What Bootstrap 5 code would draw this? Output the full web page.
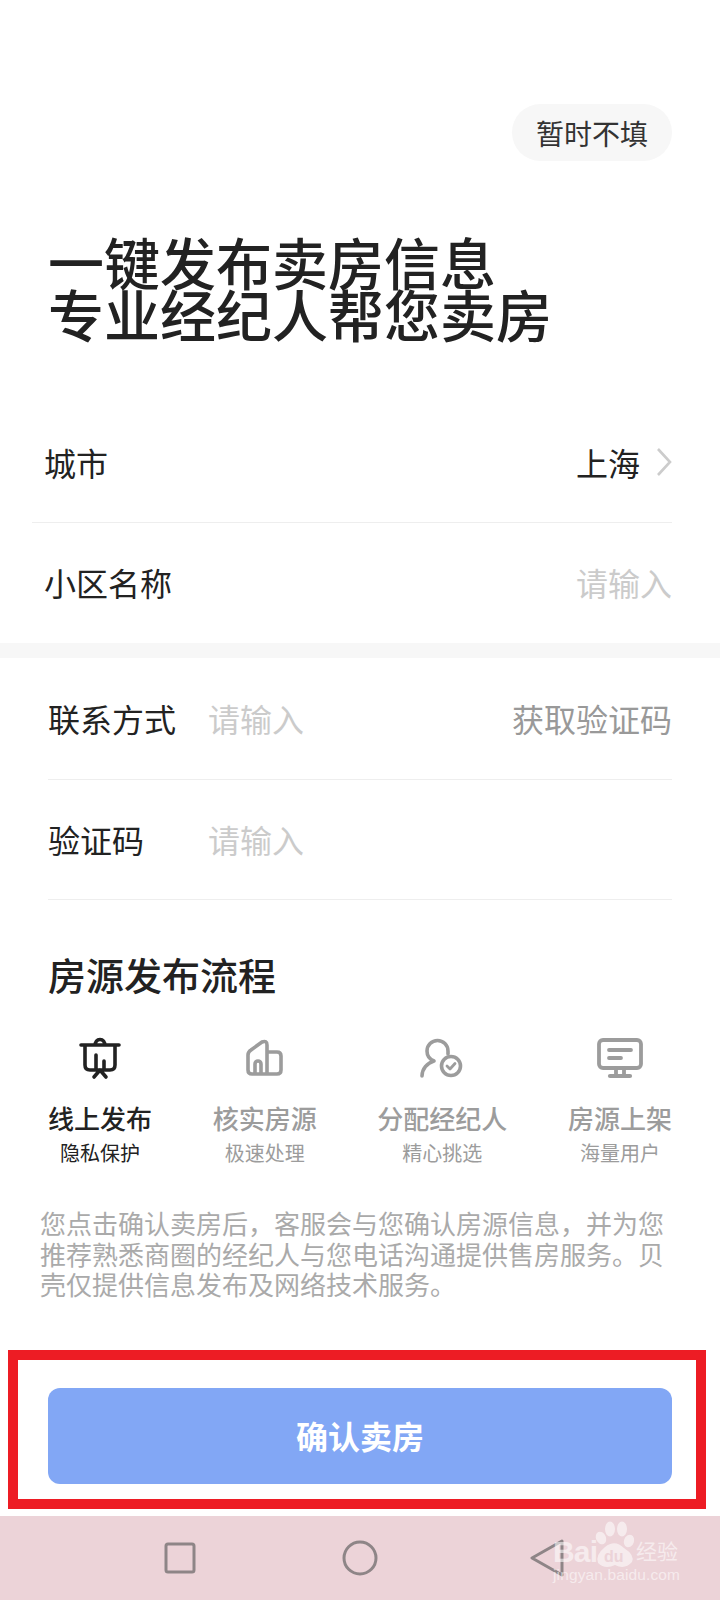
<!DOCTYPE html>
<html lang="zh-CN">
<head>
<meta charset="utf-8">
<title>一键发布卖房信息</title>
<link href="https://cdn.jsdelivr.net/npm/bootstrap@5.3.0/dist/css/bootstrap.min.css" rel="stylesheet">
<style>
body{font-family:"Noto Sans CJK SC","Noto Sans",sans-serif;color:#222;background:#fff;}
.screen{width:720px;height:1600px;overflow:hidden;}
.skip-wrap{padding:104px 48px 0 0;}
.skip-pill{width:160px;height:57px;background:#f7f7f7;border-radius:29px;font-size:28px;color:#333;}
.headline{font-size:56px;line-height:52px;font-weight:500;margin:74px 0 65px 48px;color:#222;}
.field{height:119px;font-size:32px;line-height:40px;padding-bottom:2px;}
.field-a{margin:0 48px 0 32px;padding-left:12px;}
.field-line{border-bottom:1px solid #eeeeee;}
.field-b{margin:0 48px;}
.field-top{height:122px;}
.field-last{height:120px;}
.field-tall{height:120px;}
.field-name{width:160px;font-weight:400;}
.muted-ph{color:#cbcbcb;}
.code-link{color:#999;}
.band{height:15px;background:#f7f7f7;}
.section-title{font-size:38px;line-height:50px;font-weight:500;margin:49px 48px 0;}
.flow{margin:31px 48px 0;}
.flow-step{color:#9c9c9c;}
.flow-step.on{color:#222;}
.flow-step svg{display:block;width:60px;height:55px;}
.step-title{font-size:26px;line-height:34px;margin-top:16px;font-weight:500;white-space:nowrap;}
.step-note{font-size:20px;line-height:28px;margin-top:4px;white-space:nowrap;}
.legal{margin:41px 40px 0 40px;font-size:26px;line-height:30.6px;color:#aaa;height:92px;}
.red-frame{margin:50px 14px 0 8px;height:159px;border:10px solid #ed1c24;padding:28px 24px 0 30px;}
.go-btn{height:96px;background:#82a7f5;border:0;border-radius:12px;color:#fff;font-size:32px;font-weight:700;padding-bottom:8px;}
.go-btn:hover,.go-btn:active{background:#82a7f5!important;color:#fff!important;}
.sys-bar{margin-top:7px;height:84px;background:#ecd3d8;position:relative;padding-left:164px;}
.sys-bar svg.k{display:block;}
.key-round{margin-left:146px;}
.key-back{margin-left:151px;}
.mark-wm{position:absolute;left:0;top:0;width:720px;height:84px;}
.mark-wm text{fill:#fff;}
</style>
</head>
<body>
<div class="screen d-flex flex-column">
  <div class="skip-wrap d-flex justify-content-end">
    <div class="skip-pill d-flex align-items-center justify-content-center">暂时不填</div>
  </div>
  <h1 class="headline">一键发布卖房信息<br>专业经纪人帮您卖房</h1>

  <div class="field field-a field-line d-flex align-items-center justify-content-between">
    <span>城市</span>
    <span class="d-flex align-items-center">上海
      <svg class="ms-3" width="16" height="30" viewBox="0 0 16 30"><path d="M2 2 L14 15 L2 28" fill="none" stroke="#cccccc" stroke-width="2.6"/></svg>
    </span>
  </div>
  <div class="field field-a field-tall d-flex align-items-center justify-content-between">
    <span>小区名称</span>
    <span class="muted-ph">请输入</span>
  </div>
  <div class="band"></div>

  <div class="field field-b field-top field-line d-flex align-items-center">
    <span class="field-name">联系方式</span>
    <span class="muted-ph">请输入</span>
    <span class="code-link ms-auto">获取验证码</span>
  </div>
  <div class="field field-b field-last field-line d-flex align-items-center">
    <span class="field-name">验证码</span>
    <span class="muted-ph">请输入</span>
  </div>

  <div class="section-title">房源发布流程</div>
  <div class="flow d-flex justify-content-between">
    <div class="flow-step on d-flex flex-column align-items-center">
      <svg viewBox="0 0 60 55" fill="none" stroke="currentColor" stroke-width="3.6" stroke-linecap="round" stroke-linejoin="round">
        <path d="M11 15 H49 M25.5 15 A4.6 4.6 0 1 1 34.5 15 M15 15 V35 Q15 40 20 40 H40 Q45 40 45 35 V15 M26 25 V39 M34 31 V39 M24 47 L30 40 L36 47"/>
      </svg>
      <div class="step-title">线上发布</div>
      <div class="step-note">隐私保护</div>
    </div>
    <div class="flow-step d-flex flex-column align-items-center">
      <svg viewBox="0 0 60 55" fill="none" stroke="currentColor" stroke-width="3.6" stroke-linecap="round" stroke-linejoin="round">
        <path d="M32 44 V15 Q32 10 27 12 L16 20 Q13 22 13 25 V40 Q13 44 17 44 H42 Q46 44 46 40 V26 Q46 22 42 22 H32 M20 44 V34 A3 3 0 0 1 26 34 V44"/>
      </svg>
      <div class="step-title">核实房源</div>
      <div class="step-note">极速处理</div>
    </div>
    <div class="flow-step d-flex flex-column align-items-center">
      <svg viewBox="0 0 60 55" fill="none" stroke="currentColor" stroke-width="3.6" stroke-linecap="round" stroke-linejoin="round">
        <path d="M10 46 C10 39 15 33 22 31 C17 29 15 25 15 21 A10.5 10.5 0 0 1 36 21 V24"/>
        <circle cx="39" cy="36" r="9.5"/>
        <path d="M35 36 L38 39 L43 33.5" stroke-width="2.8"/>
      </svg>
      <div class="step-title">分配经纪人</div>
      <div class="step-note">精心挑选</div>
    </div>
    <div class="flow-step d-flex flex-column align-items-center">
      <svg viewBox="0 0 60 55" fill="none" stroke="currentColor" stroke-width="3.8" stroke-linecap="round" stroke-linejoin="round">
        <rect x="9" y="10" width="42" height="28" rx="4"/>
        <path d="M19 20 H41 M19 28 H31 M26 38 V45 M34 38 V45"/>
        <path d="M20 46 H40" stroke-width="4.2"/>
      </svg>
      <div class="step-title">房源上架</div>
      <div class="step-note">海量用户</div>
    </div>
  </div>

  <p class="legal">您点击确认卖房后，客服会与您确认房源信息，并为您推荐熟悉商圈的经纪人与您电话沟通提供售房服务。贝壳仅提供信息发布及网络技术服务。</p>

  <div class="red-frame">
    <button type="button" class="btn go-btn w-100 d-flex align-items-center justify-content-center">确认卖房</button>
  </div>

  <div class="sys-bar d-flex align-items-center">
    <svg class="k" width="32" height="32" viewBox="0 0 32 32"><rect x="2" y="2" width="28" height="28" rx="2" fill="none" stroke="#8e8587" stroke-width="3"/></svg>
    <svg class="k key-round" width="36" height="36" viewBox="0 0 36 36"><circle cx="18" cy="18" r="16" fill="none" stroke="#8e8587" stroke-width="3"/></svg>
    <svg class="k key-back" width="36" height="38" viewBox="0 0 36 38"><path d="M33 2 L3 19 L33 36 Z" fill="none" stroke="#8e8587" stroke-width="3" stroke-linejoin="round"/></svg>
    <svg class="mark-wm" viewBox="0 0 720 84">
      <g fill="#fff" opacity=".55">
        <ellipse cx="601" cy="22" rx="5" ry="6.5" transform="rotate(-25 601 22)"/>
        <ellipse cx="610" cy="13" rx="5" ry="7.5"/>
        <ellipse cx="622" cy="13" rx="5" ry="7.5"/>
        <ellipse cx="629" cy="25" rx="5" ry="6.5" transform="rotate(20 629 25)"/>
        <path d="M605 31 Q615 23 624 32 Q635 39 632 46 Q625 54 615 49 Q605 54 598 47 Q595 39 605 31Z"/>
        <text x="553" y="46" font-family="Liberation Sans,sans-serif" font-size="30" font-weight="700" textLength="45">Bai</text>
        <text x="636" y="43" font-family="Noto Sans CJK SC,sans-serif" font-size="21">经验</text>
        <text x="553" y="64" font-family="Liberation Sans,sans-serif" font-size="15.5" textLength="127">jingyan.baidu.com</text>
      </g>
      <text x="604" y="46" font-family="Liberation Sans,sans-serif" font-size="16" font-weight="700" style="fill:#ecd3d8">du</text>
    </svg>
  </div>
</div>
<script src="https://cdn.jsdelivr.net/npm/bootstrap@5.3.0/dist/js/bootstrap.bundle.min.js"></script>
</body>
</html>
